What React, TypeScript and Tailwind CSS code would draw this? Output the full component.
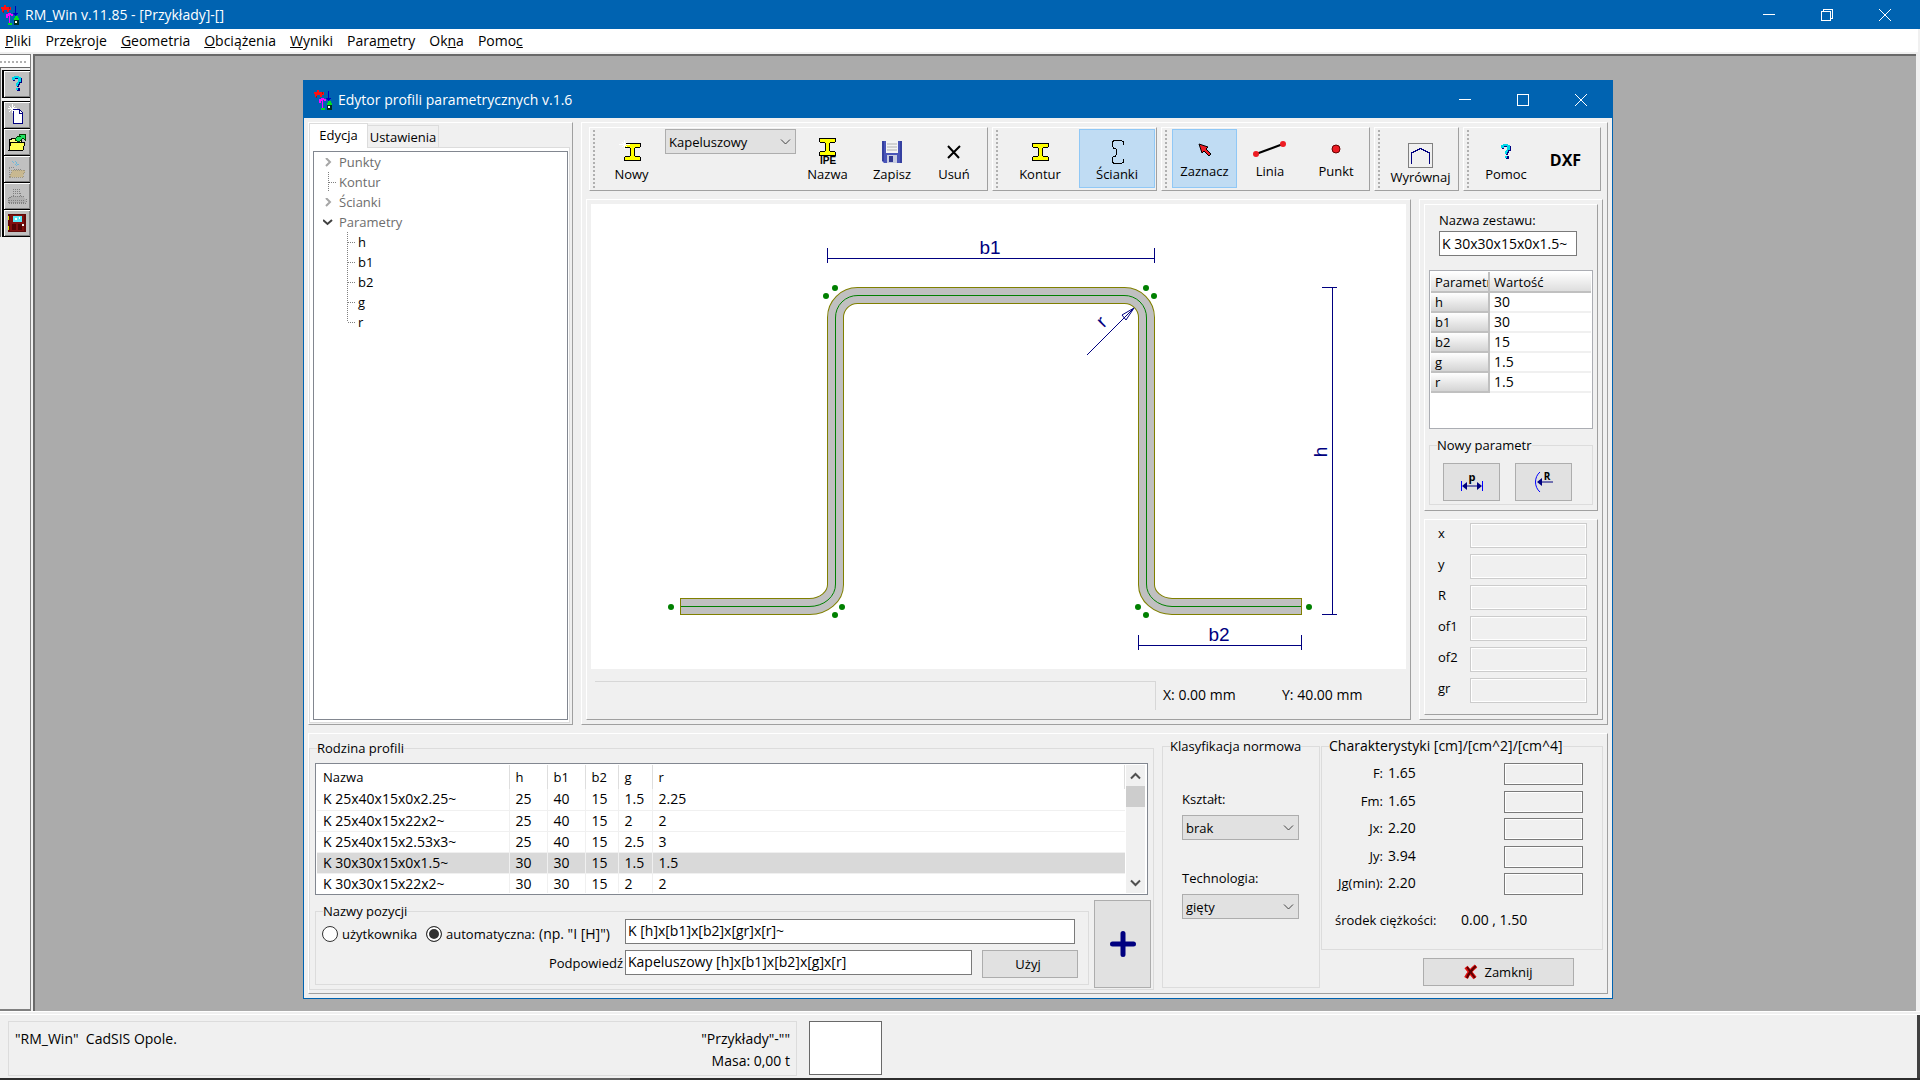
import { useState } from "react";
import type { ReactNode } from "react";

interface Profile {
  name: string;
  h: string;
  b1: string;
  b2: string;
  g: string;
  r: string;
}

const profiles: Profile[] = [
  { name: "K 25x40x15x0x2.25~", h: "25", b1: "40", b2: "15", g: "1.5", r: "2.25" },
  { name: "K 25x40x15x22x2~", h: "25", b1: "40", b2: "15", g: "2", r: "2" },
  { name: "K 25x40x15x2.53x3~", h: "25", b1: "40", b2: "15", g: "2.5", r: "3" },
  { name: "K 30x30x15x0x1.5~", h: "30", b1: "30", b2: "15", g: "1.5", r: "1.5" },
  { name: "K 30x30x15x22x2~", h: "30", b1: "30", b2: "15", g: "2", r: "2" },
];

const params = [
  ["h", "30"],
  ["b1", "30"],
  ["b2", "15"],
  ["g", "1.5"],
  ["r", "1.5"],
];

const characteristics = [
  ["F:", "1.65"],
  ["Fm:", "1.65"],
  ["Jx:", "2.20"],
  ["Jy:", "3.94"],
  ["Jg(min):", "2.20"],
];

// text before the underlined key, the key, text after it
const menu = [
  ["", "P", "liki"],
  ["Prze", "k", "roje"],
  ["", "G", "eometria"],
  ["", "O", "bciążenia"],
  ["", "W", "yniki"],
  ["Para", "m", "etry"],
  ["Ok", "n", "a"],
  ["Pomo", "c", ""],
];

const raised =
  "border border-t-white border-l-white border-r-[#a0a0a0] border-b-[#a0a0a0]";

/* ---------- Icons ---------- */

const AppIcon = () => (
  <svg width="20" height="22" viewBox="0 0 20 22" shapeRendering="crispEdges" aria-hidden="true">
    <path d="M1 3h3V1h2v2h5v3H9v2H7V6H4v2H2V5H1z" fill="#ff1010" />
    <path d="M3 7h1v2H3zM9 3h1v2H9z" fill="#a01020" />
    <path d="M15 2h1v7h2v1h-1v1h-1v3h-1v-3h-1v-1h-1V9h2z" fill="#0000c0" />
    <path d="M6 10h2V9h3v1h2v2h-2v-1h-1v8H9v-7H8v2H6z" fill="#ff00ff" />
    <path d="M8 19h4v2H8zM15 12h3v2h1v2h-5v-2h1z" fill="#00e020" />
    <path d="M14 16h5v5h-5z" fill="#003020" />
    <path d="M15 17h2v2h-2z" fill="#fff" />
  </svg>
);

const HelpIcon = () => (
  <svg width="12" height="16" viewBox="0 0 12 16" shapeRendering="crispEdges" aria-hidden="true">
    <path d="M3 1h6v1h2v5H9v2H8v2H6V8h1V7h1V3H4v2H2V2h1zM6 12h3v3H6z" fill="#000080" />
    <path d="M3 0h5v1h2v5H8v2H7v2H5V7h1V6h1V2H4v2H1V1h2zM5 12h2v2H5z" fill="#00d8e8" />
  </svg>
);

const NewFileIcon = () => (
  <svg width="20" height="22" viewBox="0 0 20 22" shapeRendering="crispEdges" aria-hidden="true">
    <path d="M6 5h6l3 3v11H6z" fill="#fff" stroke="#000080" />
    <path d="M12 5v4h3" fill="none" stroke="#000080" />
    <path d="M5 0v9M1 4.500h9M2 2l6 6M8 2l-6 6" stroke="#fff" />
  </svg>
);

const OpenIcon = () => (
  <svg width="20" height="20" viewBox="0 0 20 20" shapeRendering="crispEdges" aria-hidden="true">
    <path d="M2 18V7h2V6h4v1h6v3" fill="#ffff80" stroke="#000" />
    <path d="M2 18l2-8h14l-2 8z" fill="#ffff50" stroke="#000" />
    <path d="M8 8c1-3 3-4 5-4l-1-2h6v6l-2-2-4 4z" fill="#20e060" stroke="#004000" />
  </svg>
);

const SaveDisabledIcon = () => (
  <svg width="20" height="20" viewBox="0 0 20 20" shapeRendering="crispEdges" aria-hidden="true">
    <path d="M2 18V8h4l1 2h7v2" fill="none" stroke="#8a8a8a" strokeDasharray="1 1" />
    <path d="M3 18l2-7h13l-2 7z" fill="#c8b890" stroke="#a09880" strokeDasharray="1 1" />
    <path d="M5 2l7 7M8 2l5 6" stroke="#70b8d8" strokeDasharray="1 1" />
  </svg>
);

const PrintDisabledIcon = () => (
  <svg width="20" height="20" viewBox="0 0 20 20" shapeRendering="crispEdges" aria-hidden="true">
    <path d="M6 10l1-7h5l2 7M8 5h4M8 7h5" fill="none" stroke="#808080" strokeDasharray="1 1" />
    <path d="M1 13l4-3h10l4 3v4H1zM2 14h16M2 16h16" fill="#b0b0b0" stroke="#808080" strokeDasharray="1 1" />
  </svg>
);

const DoorIcon = () => (
  <svg width="18" height="18" viewBox="0 0 18 18" shapeRendering="crispEdges" aria-hidden="true">
    <path d="M0 0h18v18H0z" fill="#600808" />
    <path d="M2 1h14v16H2z" fill="#801010" />
    <path d="M5 2h9v6H5z" fill="#60e8f8" />
    <path d="M7 4h2v2H7zM11 3h1v2h-1z" fill="#fff" />
    <path d="M4 10h4v6H4zM10 10h4v6h-4z" fill="#500404" />
    <path d="M0 2h1v4H0zM0 12h1v4H0z" fill="#e0e000" />
    <path d="M14 10h2v2h-2z" fill="#f0f0f0" />
  </svg>
);

const Beam = () => (
  <path
    d="M.5 .5h16v3l-1 1h-4l-1 1v7l1 1h4l1 1v3h-16v-3l1-1h4l1-1v-7l-1-1h-4l-1-1z"
    fill="#ffff00"
    stroke="#000"
  />
);

const BeamIcon = () => (
  <svg width="17" height="18" viewBox="0 0 17 18" shapeRendering="crispEdges" aria-hidden="true">
    <Beam />
  </svg>
);

const NewBeamIcon = () => (
  <svg width="28" height="24" viewBox="0 0 28 24" shapeRendering="crispEdges" aria-hidden="true">
    <g transform="translate(6 3)">
      <Beam />
    </g>
    <path d="M6.500 0v9M1 4.500h11M4 2l5 5M9 2l-5 5" stroke="#fff" />
  </svg>
);

const NameBeamIcon = () => (
  <svg width="20" height="28" viewBox="0 0 20 28" aria-hidden="true">
    <g transform="translate(1 0)" shapeRendering="crispEdges">
      <Beam />
    </g>
    <text x="10" y="26" textAnchor="middle" fontFamily="Liberation Sans, sans-serif" fontSize="10" fontWeight="bold">
      IPE
    </text>
  </svg>
);

const FloppyIcon = () => (
  <svg width="22" height="23" viewBox="0 0 22 23" aria-hidden="true">
    <path d="M1 0h20v22H3l-2-2z" fill="#4a55b8" />
    <path d="M1 0h2v20H1zM19 0h2v22h-2z" fill="#3540a0" />
    <path d="M5 0h12v12H5z" fill="#f4f4f4" />
    <path d="M6 3h10M6 6h10M6 9h10" stroke="#b0b0b0" />
    <path d="M6 14h10v8H6z" fill="#c8cce0" />
    <path d="M8 15h4v6H8z" fill="#303890" />
  </svg>
);

const DeleteIcon = () => (
  <svg width="14" height="14" viewBox="0 0 14 14" aria-hidden="true">
    <path d="M1 1l11 12M13 1L1 13" stroke="#000" strokeWidth="2" />
  </svg>
);

const WallsIcon = () => (
  <svg width="15" height="26" viewBox="0 0 15 26" fill="none" aria-hidden="true">
    <path
      d="M13.500 6V3L11.500 1.500H4L2.500 3v4l1 2h2l1 1.500v5l-1 1.500h-2l-1 2v4L4 24.500h7.500l2-1.500v-3"
      stroke="#000"
      shapeRendering="crispEdges"
    />
  </svg>
);

const CursorIcon = () => (
  <svg width="14" height="18" viewBox="0 0 14 18" aria-hidden="true">
    <path d="M1 4l9 3-2 2 5 5-2 2-5-5-2 2z" fill="#ed1c24" stroke="#000" strokeWidth="1" />
  </svg>
);

const LineIcon = () => (
  <svg width="36" height="18" viewBox="0 0 36 18" aria-hidden="true">
    <path d="M4 14L31 4" stroke="#000" strokeWidth="2" />
    <circle cx="4" cy="14" r="3" fill="#ed1c24" />
    <circle cx="31" cy="4" r="3" fill="#ed1c24" />
  </svg>
);

const PointIcon = () => (
  <svg width="10" height="10" viewBox="0 0 10 10" aria-hidden="true">
    <circle cx="5" cy="5" r="4" fill="#ed1c24" stroke="#600" />
  </svg>
);

const AlignIcon = () => (
  <svg width="25" height="25" viewBox="0 0 25 25" fill="none" shapeRendering="crispEdges" aria-hidden="true">
    <rect x=".5" y=".5" width="24" height="24" stroke="#808080" />
    <path d="M3.500 21V10L12.500 5.500L21.500 10v11" stroke="#000080" />
  </svg>
);

const PlusIcon = () => (
  <svg width="26" height="26" viewBox="0 0 26 26" aria-hidden="true">
    <path d="M13 2.500v21M2.500 13h21" stroke="#000080" strokeWidth="5" strokeLinecap="round" />
  </svg>
);

const CrossIcon = () => (
  <svg width="14" height="16" viewBox="0 0 14 16" aria-hidden="true">
    <path d="M2 3l9 11M12 2C7 6 4 10 2 14" stroke="#e01010" strokeWidth="4" />
    <path d="M3 3l8 11M12 2C7 6 4 10 3 14" stroke="#600000" strokeWidth="2" />
  </svg>
);

const LengthParamIcon = () => (
  <svg width="22" height="28" viewBox="0 0 22 28" aria-hidden="true">
    <text x="11" y="13" textAnchor="middle" fontFamily="Open Sans, sans-serif" fontSize="11" fontWeight="bold">
      p
    </text>
    <path d="M.5 13v10M21.500 13v10" stroke="#0000ff" />
    <path d="M3 18h16" stroke="#000080" />
    <path d="M1 18l5-4v8zM21 18l-5-4v8z" fill="#000080" />
  </svg>
);

const RadiusParamIcon = () => (
  <svg width="20" height="28" viewBox="0 0 20 28" aria-hidden="true">
    <path d="M6 4C0 9 0 19 6 24" fill="none" stroke="#0000ff" />
    <path d="M5 14h14" stroke="#000080" />
    <path d="M3 14l5-4v8z" fill="#000080" />
    <text x="13" y="12" textAnchor="middle" fontFamily="Open Sans, sans-serif" fontSize="10" fontWeight="bold">
      R
    </text>
  </svg>
);

const Chevron = ({ up = false, className = "" }: { up?: boolean; className?: string }) => (
  <svg width="11" height="8" viewBox="0 0 11 8" fill="none" className={className} aria-hidden="true">
    <path d={up ? "M1 6.500L5.500 2L10 6.500" : "M1 1.500L5.500 6L10 1.500"} stroke="currentColor" />
  </svg>
);

/* ---------- Window parts ---------- */

const WindowButtons = ({ restored = false }: { restored?: boolean }) => (
  <div className="flex h-full">
    <button aria-label="Minimalizuj" className="flex w-[58px] items-center justify-center">
      <svg width="12" height="12" stroke="#fff" shapeRendering="crispEdges">
        <path d="M0 5.500h12" />
      </svg>
    </button>
    <button aria-label="Maksymalizuj" className="flex w-[58px] items-center justify-center">
      <svg width="12" height="12" stroke="#fff" fill="none" shapeRendering="crispEdges">
        {restored ? <path d="M.5 2.500h9v9h-9zM2.500 2V.5h9v9H10" /> : <path d="M.5 .5h11v11H.5z" />}
      </svg>
    </button>
    <button aria-label="Zamknij okno" className="flex w-[58px] items-center justify-center">
      <svg width="12" height="12" stroke="#fff">
        <path d="M0 0l12 12M12 0L0 12" />
      </svg>
    </button>
  </div>
);

const SideButton = ({ label, disabled, children }: { label: string; disabled?: boolean; children: ReactNode }) => (
  <button
    aria-label={label}
    disabled={disabled}
    className="flex h-[27px] w-full items-center justify-center border-b border-l-2 border-black bg-[#c0c0c0] shadow-[inset_1px_1px_0_#fff,inset_-1px_-1px_0_#808080]"
  >
    {children}
  </button>
);

const Band = ({ className = "", children }: { className?: string; children: ReactNode }) => (
  <div className={`${raised} flex h-16 pt-px ${className}`}>
    <div className="mx-[3px] my-px w-[2px] shrink-0 bg-[linear-gradient(#b0b0b0_50%,transparent_50%)] bg-[length:2px_4px]" />
    {children}
  </div>
);

interface ToolProps {
  label: string;
  icon: ReactNode;
  className?: string;
  active?: boolean;
  onClick?: () => void;
}

const Tool = ({ label, icon, className = "pb-1", active, onClick }: ToolProps) => (
  <button
    onClick={onClick}
    className={`flex h-[59px] shrink-0 flex-col items-center justify-end border ${
      active ? "border-[#90c8f6] bg-[#c0dcf3]" : "border-transparent"
    } ${className}`}
  >
    <span className="flex h-6 items-center">{icon}</span>
    <span className="leading-5">{label}</span>
  </button>
);

const Select = ({ id, label, options, className = "" }: { id: string; label?: string; options: string[]; className?: string }) => (
  <div className={`relative h-[25px] ${className}`}>
    <select
      id={id}
      aria-label={label}
      className="h-full w-full appearance-none border border-[#adadad] bg-[#e1e1e1] pl-[3px] leading-5"
    >
      {options.map((o) => (
        <option key={o}>{o}</option>
      ))}
    </select>
    <Chevron className="pointer-events-none absolute top-[9px] right-[5px] text-[#444]" />
  </div>
);

// dotted connector of the tree: stub to the right plus optional vertical line
const Branch = ({ up, down }: { up?: boolean; down?: boolean }) => (
  <svg width="10" height="20" stroke="#808080" strokeDasharray="1 1" shapeRendering="crispEdges" aria-hidden="true">
    {up && <path d="M.5 0v10" />}
    {down && <path d="M.5 10v10" />}
    <path d="M1 10.500h7" />
  </svg>
);

const TreeNode = ({ label, open }: { label: string; open?: boolean }) => (
  <li className="flex h-5 items-center pl-[9px]">
    <button aria-label={label} className="flex w-[13px] justify-start">
      <svg width="10" height="9" fill="none" strokeWidth="2" aria-hidden="true">
        {open ? <path d="M0 2l4.500 4L9 2" stroke="#404040" /> : <path d="M3 0l4 4-4 4" stroke="#a6a6a6" />}
      </svg>
    </button>
    <span className="pl-[3px] text-[#6d6d6d]">{label}</span>
  </li>
);

const ProfileDrawing = () => {
  const axis =
    "M680 606.500H809A26 22 0 0 0 835.500 584V318A22 22 0 0 1 858 295.500H1124A22 22 0 0 1 1146.500 318V584A26 22 0 0 0 1172 606.500H1302";
  const dots = [
    [826, 296], [835, 288], [1146, 288], [1154, 296], [842, 607],
    [835, 615], [1138, 607], [1146, 615], [1309, 607], [671, 607],
  ];
  return (
    <svg viewBox="591 204 815 465" className="block w-full bg-white" role="img" aria-label="Przekrój kapeluszowy">
      <g fill="none">
        <path d={axis} stroke="#808000" strokeWidth="17" />
        <path d={axis} stroke="#c0c0c0" strokeWidth="15" />
        <path d={axis} stroke="#008000" />
        <path d="M680.500 598v17M1301.500 598v17" stroke="#808000" shapeRendering="crispEdges" />
      </g>
      {dots.map(([x, y]) => (
        <circle key={`${x}-${y}`} cx={x} cy={y} r="3" fill="#008000" />
      ))}
      <g stroke="#000080" fill="none">
        <path d="M827.500 248v15M1154.500 248v15M827 258.500h328" shapeRendering="crispEdges" />
        <path d="M1138.500 635v15M1301.500 635v15M1138 645.500h164" shapeRendering="crispEdges" />
        <path d="M1322 287.500h15M1322 614.500h15M1332.500 287v328" shapeRendering="crispEdges" />
        <path d="M1087 355L1134 308M1134 308l-12 7 4 5z" />
      </g>
      <g fill="#000080" fontFamily="Liberation Sans, sans-serif" fontSize="19" textAnchor="middle">
        <text x="990" y="254">b1</text>
        <text x="1219" y="641">b2</text>
        <text transform="translate(1327 452) rotate(-90)">h</text>
        <text transform="translate(1106 326) rotate(-45)">r</text>
      </g>
    </svg>
  );
};

const cell = "border-r border-b border-[#f0f0f0] pl-1.5";

const App: React.FC = () => {
  const [tool, setTool] = useState("Zaznacz");
  const [selected, setSelected] = useState(3);
  const [auto, setAuto] = useState(true);
  const [pattern, setPattern] = useState("K [h]x[b1]x[b2]x[gr]x[r]~");
  const [hint, setHint] = useState("Kapeluszowy [h]x[b1]x[b2]x[g]x[r]");
  const [setName, setSetName] = useState("K 30x30x15x0x1.5~");

  return (
    <div className="flex min-h-screen flex-col bg-[#f0f0f0] font-['Open_Sans',sans-serif] text-[13px] leading-5 text-black">
      {/* Main title bar */}
      <header className="flex h-[29px] items-center bg-[#0063b1] pr-1.5 text-[14px] text-white">
        <AppIcon />
        <h1 className="flex-1 pl-[5px]">RM_Win v.11.85 - [Przykłady]-[]</h1>
        <WindowButtons restored />
      </header>

      <nav className="mr-[2px] mb-[2px] flex h-[23px] items-center bg-white pt-px pl-[5px] text-[14px]">
        {menu.map(([before, key, after]) => (
          <a key={before + key + after} href="#" className="mr-[14px]">
            {before}
            <span className="underline">{key}</span>
            {after}
          </a>
        ))}
      </nav>

      <main className="flex flex-1">
        <aside className="w-[31px] border-t border-r border-b-2 border-[#808080] bg-[#f0f0f0]">
          <div className="h-[12px] border-r-2 border-white bg-white pt-[6px]">
            <div className="h-[2px] bg-[linear-gradient(90deg,#b0b0b0_50%,transparent_50%)] bg-[length:4px_2px]" />
          </div>
          <div className="border-t border-l border-[#696969] pt-[2px] pl-px">
            <div className="mb-[3px] border-t border-black">
              <SideButton label="Pomoc">
                <HelpIcon />
              </SideButton>
            </div>
            <div className="border-t border-black">
              <SideButton label="Nowy projekt">
                <NewFileIcon />
              </SideButton>
              <SideButton label="Otwórz">
                <OpenIcon />
              </SideButton>
              <SideButton label="Zapisz projekt" disabled>
                <SaveDisabledIcon />
              </SideButton>
              <SideButton label="Drukuj" disabled>
                <PrintDisabledIcon />
              </SideButton>
              <SideButton label="Koniec">
                <DoorIcon />
              </SideButton>
            </div>
          </div>
        </aside>

        {/* Desktop area */}
        <div className="relative mr-1 ml-[2px] flex-1 border-t-2 border-l-2 border-[#696969] bg-[#ababab]">
          <section className="mt-6 ml-[268px] w-[1310px] border border-[#0063b1] bg-[#f0f0f0]">
            <header className="flex h-[37px] items-center bg-[#0063b1] pr-[2px] pl-[9px] text-[14px] text-white">
              <AppIcon />
              <h2 className="flex-1 pl-[5px]">Edytor profili parametrycznych v.1.6</h2>
              <WindowButtons />
            </header>

            <div className="p-1">
              <div className="flex gap-2">
                {/* Tree */}
                <div className={`${raised} flex w-[265px] flex-col pr-[2px] pb-px`}>
                  <div className="relative z-10 -mb-px flex items-end">
                    <button className="h-[25px] w-[59px] border border-b-0 border-[#dcdcdc] bg-white pb-[3px]">Edycja</button>
                    <button className="h-[23px] w-[71px] border border-l-0 border-[#dcdcdc]">Ustawienia</button>
                  </div>
                  <div className="flex flex-1 flex-col border border-[#dcdcdc] bg-white p-[3px] pr-px pb-[2px]">
                    <ul className="flex-1 border border-[#828790] bg-white">
                      <TreeNode label="Punkty" />
                      <li className="flex h-5 items-center pl-[14px] text-[#6d6d6d]">
                        <Branch up down />
                        <span className="pl-px">Kontur</span>
                      </li>
                      <TreeNode label="Ścianki" />
                      <TreeNode label="Parametry" open />
                      {params.map(([name], i) => (
                        <li key={name} className="flex h-5 items-center pl-[33px]">
                          <Branch up down={i < params.length - 1} />
                          <span className="pl-px">{name}</span>
                        </li>
                      ))}
                    </ul>
                  </div>
                </div>

                <div className={`${raised} flex-1 p-1`}>
                  {/* Toolbars */}
                  <div className="flex gap-1 pr-[2px] pl-[3px]">
                    <Band className="w-[399px]">
                      <Tool label="Nowy" icon={<NewBeamIcon />} className="w-[67px] pb-[3px]" />
                      <Select id="kind" label="Rodzaj profilu" options={["Kapeluszowy"]} className="w-[131px]" />
                      <Tool label="Nazwa" icon={<NameBeamIcon />} className="w-[63px] pb-[3px]" />
                      <Tool label="Zapisz" icon={<FloppyIcon />} className="w-[66px] pb-[3px]" />
                      <Tool label="Usuń" icon={<DeleteIcon />} className="w-[58px] pb-[3px]" />
                    </Band>
                    <Band className="w-[165px]">
                      <Tool label="Kontur" icon={<BeamIcon />} className="w-[78px] pb-[3px]" />
                      <Tool label="Ścianki" icon={<WallsIcon />} active className="w-[76px] pb-[3px]" />
                    </Band>
                    <Band className="w-[209px]">
                      <Tool
                        label="Zaznacz"
                        icon={<CursorIcon />}
                        active={tool === "Zaznacz"}
                        onClick={() => setTool("Zaznacz")}
                        className="ml-[2px] w-[65px] pb-1.5"
                      />
                      <Tool
                        label="Linia"
                        icon={<LineIcon />}
                        active={tool === "Linia"}
                        onClick={() => setTool("Linia")}
                        className="w-[66px] pb-1.5"
                      />
                      <Tool
                        label="Punkt"
                        icon={<PointIcon />}
                        active={tool === "Punkt"}
                        onClick={() => setTool("Punkt")}
                        className="w-[66px] pb-1.5"
                      />
                    </Band>
                    <Band className="w-[85px]">
                      <Tool label="Wyrównaj" icon={<AlignIcon />} className="w-[75px]" />
                    </Band>
                    <Band className="flex-1">
                      <Tool label="Pomoc" icon={<HelpIcon />} className="w-[68px] pb-[3px]" />
                      <button className="w-[51px] text-[16px] font-bold">DXF</button>
                    </Band>
                  </div>

                  <div className="mt-2 flex gap-2">
                    {/* Drawing */}
                    <div className={`${raised} w-[825px] px-1 pt-1`}>
                      <ProfileDrawing />
                      <div className="flex pt-3 pb-[9px] pl-1 text-[14px]">
                        <div className="h-[29px] w-[561px] border-t border-r border-[#d7d7d7]" />
                        <output className="w-[126px] pt-1 pl-[7px]">X: 0.00 mm</output>
                        <output className="pt-1">Y: 40.00 mm</output>
                      </div>
                    </div>

                    <div className={`${raised} flex flex-1 flex-col gap-2 p-1`}>
                      <div className={`${raised} h-[307px] px-1 pt-[5px]`}>
                        <div className="pl-[10px]">
                          <label htmlFor="set-name" className="block">
                            Nazwa zestawu:
                          </label>
                          <input
                            id="set-name"
                            value={setName}
                            onChange={(e) => setSetName(e.target.value)}
                            className="mt-px block h-[25px] w-[138px] border border-[#7a7a7a] bg-white px-[2px] text-[14px]"
                          />
                        </div>
                        <div className="mt-[14px] h-[159px] border border-[#abadb3] bg-white p-px">
                          <table className="w-full table-fixed text-left">
                            <thead className="bg-linear-to-b from-white to-[#dcdcdc]">
                              <tr className="h-5">
                                <th className="w-[58px] overflow-hidden border-r-2 border-b-2 border-[#c0c0c0] pl-1 font-normal leading-4 whitespace-nowrap">
                                  Parametr
                                </th>
                                <th className="border-b-2 border-[#c0c0c0] pl-1 font-normal leading-4">Wartość</th>
                              </tr>
                            </thead>
                            <tbody>
                              {params.map(([name, value]) => (
                                <tr key={name} className="h-5">
                                  <th className="border-r-2 border-b-2 border-[#c0c0c0] bg-linear-to-b from-white to-[#d4d4d4] pl-1 font-normal leading-4">
                                    {name}
                                  </th>
                                  <td className="border-b-2 border-[#f0f0f0] pl-1 text-[14px] leading-4">{value}</td>
                                </tr>
                              ))}
                            </tbody>
                          </table>
                        </div>
                        <fieldset className="mt-1.5 h-[70px] border border-[#dcdcdc]">
                          <legend className="ml-[7px]">Nowy parametr</legend>
                          <div className="mt-2 flex gap-[15px] pl-[13px]">
                            <button
                              aria-label="Nowy wymiar"
                              className="flex h-[38px] w-[57px] items-center justify-center border border-[#adadad] bg-[#e1e1e1]"
                            >
                              <LengthParamIcon />
                            </button>
                            <button
                              aria-label="Nowy promień"
                              className="flex h-[38px] w-[57px] items-center justify-center border border-[#adadad] bg-[#e1e1e1]"
                            >
                              <RadiusParamIcon />
                            </button>
                          </div>
                        </fieldset>
                      </div>

                      <div className={`${raised} flex h-[196px] flex-col gap-1.5 pt-[3px] pr-[10px] pl-[13px]`}>
                        {["x", "y", "R", "of1", "of2", "gr"].map((name) => (
                          <div key={name} className="flex">
                            <label htmlFor={`coord-${name}`} className="w-8">
                              {name}
                            </label>
                            <input
                              id={`coord-${name}`}
                              disabled
                              className="h-[25px] w-[117px] border border-[#cccccc] shadow-[inset_0_0_0_1px_#fff]"
                            />
                          </div>
                        ))}
                      </div>
                    </div>
                  </div>
                </div>
              </div>

              {/* Profile family */}
              <div className={`${raised} mt-2 flex pt-[2px] pr-1 pb-[3px]`}>
                <fieldset className="mt-[2px] h-[252px] w-[845px] border border-[#dcdcdc]">
                  <legend className="ml-[7px]">Rodzina profili</legend>
                  <div className="mx-[5px] mt-[5px] flex h-[132px] overflow-hidden border border-[#828790] bg-white p-px pr-[2px]">
                    <div className="h-[128px] flex-1 overflow-hidden">
                      <table className="w-full table-fixed text-left">
                        <thead>
                          <tr className="h-6">
                            <th className="w-[192px] border-r border-[#dedede] pl-1.5 font-normal">Nazwa</th>
                            <th className="w-[38px] border-r border-[#dedede] pl-1.5 font-normal">h</th>
                            <th className="w-[38px] border-r border-[#dedede] pl-1.5 font-normal">b1</th>
                            <th className="w-[33px] border-r border-[#dedede] pl-1.5 font-normal">b2</th>
                            <th className="w-[34px] border-r border-[#dedede] pl-1.5 font-normal">g</th>
                            <th className="border-r border-[#dedede] pl-1.5 font-normal">r</th>
                          </tr>
                        </thead>
                        <tbody className="text-[14px]">
                          {profiles.map((p, i) => (
                            <tr
                              key={p.name}
                              onClick={() => setSelected(i)}
                              className={i === selected ? "h-[21px] bg-[#d9d9d9]" : "h-[21px]"}
                            >
                              <td className={cell}>{p.name}</td>
                              <td className={cell}>{p.h}</td>
                              <td className={cell}>{p.b1}</td>
                              <td className={cell}>{p.b2}</td>
                              <td className={cell}>{p.g}</td>
                              <td className="border-b border-[#f0f0f0] pl-1.5">{p.r}</td>
                            </tr>
                          ))}
                        </tbody>
                      </table>
                    </div>
                    <div className="ml-px flex w-[19px] flex-col bg-[#f0f0f0] stroke-2">
                      <button aria-label="W górę" className="flex h-[21px] items-center justify-center text-[#505050]">
                        <Chevron up />
                      </button>
                      <div className="h-[21px] bg-[#cdcdcd]" />
                      <button
                        aria-label="W dół"
                        className="mt-auto flex h-[21px] items-center justify-center text-[#505050]"
                      >
                        <Chevron />
                      </button>
                    </div>
                  </div>

                  <div className="mt-[5px] mr-[2px] ml-[5px] flex gap-[5px]">
                    <fieldset className="mt-[3px] h-[82px] min-w-0 flex-1 border border-[#dcdcdc]">
                      <legend className="ml-[7px] leading-4">Nazwy pozycji</legend>
                      <div className="flex items-end pr-[13px] pl-1.5">
                        <label className="flex w-[104px] items-center gap-1">
                          <input
                            type="radio"
                            name="naming"
                            checked={!auto}
                            onChange={() => setAuto(false)}
                            className="h-4 w-4 appearance-none rounded-full border border-[#333] bg-white checked:bg-[#333] checked:shadow-[inset_0_0_0_2px_#fff]"
                          />
                          użytkownika
                        </label>
                        <label className="flex w-[199px] items-center gap-1 whitespace-nowrap">
                          <input
                            type="radio"
                            name="naming"
                            checked={auto}
                            onChange={() => setAuto(true)}
                            className="h-4 w-4 appearance-none rounded-full border border-[#333] bg-white checked:bg-[#333] checked:shadow-[inset_0_0_0_2px_#fff]"
                          />
                          automatyczna:
                          <span className="text-[14px]">(np. "I [H]")</span>
                        </label>
                        <input
                          aria-label="Wzór nazwy"
                          value={pattern}
                          onChange={(e) => setPattern(e.target.value)}
                          className="h-[25px] min-w-0 flex-1 border border-[#7a7a7a] bg-white px-[2px] pb-[2px] text-[14px]"
                        />
                      </div>
                      <div className="mt-1.5 flex pr-[10px] pl-1.5">
                        <label htmlFor="hint" className="w-[303px] pt-[3px] pr-[2px] text-right">
                          Podpowiedź
                        </label>
                        <input
                          id="hint"
                          value={hint}
                          onChange={(e) => setHint(e.target.value)}
                          className="h-[25px] min-w-0 flex-1 border border-[#7a7a7a] bg-white px-[2px] pb-[2px] text-[14px]"
                        />
                        <button
                          onClick={() => setPattern(hint)}
                          className="ml-[10px] h-7 w-[96px] border border-[#adadad] bg-[#e1e1e1] pr-1"
                        >
                          Użyj
                        </button>
                      </div>
                    </fieldset>
                    <button
                      aria-label="Dodaj profil"
                      className="flex h-[88px] w-[57px] items-center justify-center border border-[#adadad] bg-[#e1e1e1]"
                    >
                      <PlusIcon />
                    </button>
                  </div>
                </fieldset>

                <fieldset className="ml-2 h-[252px] w-[158px] border border-[#dcdcdc]">
                  <legend className="ml-[7px]">Klasyfikacja normowa</legend>
                  <div className="pt-[33px] pl-[19px]">
                    <label htmlFor="shape" className="mb-1.5 block">
                      Kształt:
                    </label>
                    <Select id="shape" options={["brak"]} className="w-[117px]" />
                    <label htmlFor="technology" className="mt-7 mb-1.5 block">
                      Technologia:
                    </label>
                    <Select id="technology" options={["gięty"]} className="w-[117px]" />
                  </div>
                </fieldset>

                <div className="ml-px flex flex-1 flex-col">
                  <fieldset className="h-[214px] border border-[#dcdcdc]">
                    <legend className="ml-[7px] text-[14px] whitespace-nowrap">Charakterystyki [cm]/[cm^2]/[cm^4]</legend>
                    <div className="mt-[7px] flex h-[132px] flex-col justify-between pr-[19px]">
                      {characteristics.map(([name, value]) => (
                        <div key={name} className="flex h-[22px]">
                          <label htmlFor={`char-${name}`} className="w-[61px] text-right">
                            {name}
                          </label>
                          <span className="flex-1 pl-[5px] text-[14px]">{value}</span>
                          <input
                            id={`char-${name}`}
                            readOnly
                            className="w-[79px] border border-[#7a7a7a] shadow-[inset_0_0_0_1px_#fff]"
                          />
                        </div>
                      ))}
                    </div>
                    <p className="mt-[15px] flex pl-[13px]">
                      <span className="w-[126px]">środek ciężkości:</span>
                      <span className="text-[14px]">0.00 , 1.50</span>
                    </p>
                  </fieldset>
                  <button className="mt-2 mr-[29px] flex h-7 w-[151px] items-center justify-center gap-1.5 self-end border border-[#adadad] bg-[#e1e1e1]">
                    <CrossIcon />
                    Zamknij
                  </button>
                </div>
              </div>
            </div>
          </section>
        </div>
      </main>

      {/* Status bar */}
      <footer className="border-t-4 border-double border-white text-[14px]">
        <div className="flex h-[63px] border-r-[3px] border-[#404040] pt-1.5 pl-2">
          <div className="flex h-[55px] w-[789px] justify-between border border-[#dcdcdc] px-1.5 pt-1.5">
            <p className="leading-[22px] whitespace-pre">"RM_Win"  CadSIS Opole.</p>
            <p className="text-right leading-[22px]">
              "Przykłady"-""
              <br />
              Masa: 0,00 t
            </p>
          </div>
          <div className="ml-3 h-[54px] w-[73px] border border-[#696969] bg-white" />
        </div>
        <div className="flex h-[2px] bg-[#2d2d2d]">
          <div className="ml-[430px] w-[200px] bg-[#606060]" />
        </div>
      </footer>
    </div>
  );
};

export default App;
